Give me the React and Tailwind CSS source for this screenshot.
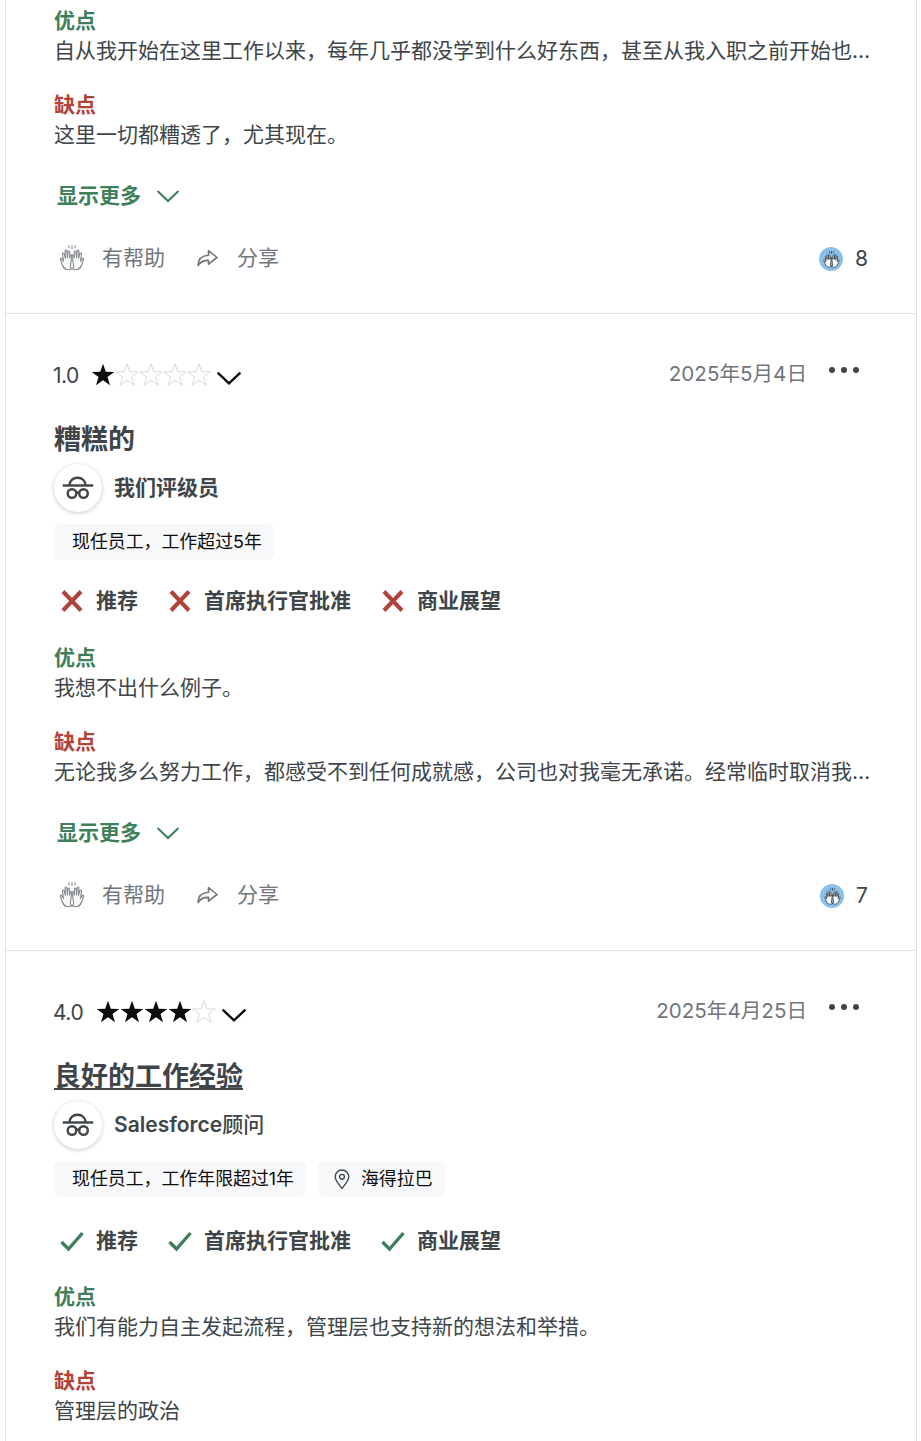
const GREEN = "#3f7f5b";
const font = { fontFamily: '"Inter","Noto Sans CJK SC",sans-serif' };

function Star({ filled }) {
  return (
    <svg width="24" height="24" viewBox="0 0 24 24" className="block shrink-0">
      <path d="M12 .8l2.800 8 8.500.1-6.800 5.100 2.500 8.200L12 17.300l-7 4.900 2.500-8.200L.7 8.900l8.500-.1z"
        fill={filled ? "#0d0d0d" : "#fff"} stroke={filled ? "#0d0d0d" : "#d9dbdf"} strokeWidth={filled ? 0 : 1} />
    </svg>
  );
}
function Chevron({ color = "#0d0d0d", w = 26, h = 26, sw = 2.200 }) {
  return (
    <svg width={w} height={h} viewBox="0 0 24 24" fill="none" stroke={color} strokeWidth={sw} className="block shrink-0">
      <path d="M1.500 7 12 17 22.500 7" />
    </svg>
  );
}
function Hands({ fill = "#f7f8f8", stroke = "#85898e", size = 26 }) {
  return (
    <svg width={size} height={size} viewBox="0 0 26 26" fill="none" stroke={stroke} strokeWidth="1.100" strokeLinecap="round" strokeLinejoin="round" className="block shrink-0">
      <path d="M12.800 23.800c-1.500 1-3.200 1.200-5 .7-2.200-.6-3.800-2.300-4.400-4.500L1.300 14.200c-.3-.9 1-1.500 1.500-.6l1.700 2.900-1-7.500c-.1-1.100 1.400-1.300 1.700-.2l1.200 4.500-.3-7.500c0-1.100 1.600-1.200 1.700 0l.6 7 .6-6.100c.1-1 1.500-1 1.600.1l.1 6.200 1-2.600c.3-1 1.500-.7 1.300.4l-1.100 6.200-.6 5.100z" fill={fill} />
      <path d="M13.200 23.800c1.500 1 3.200 1.200 5 .7 2.200-.6 3.800-2.300 4.400-4.500l2.100-5.800c.3-.9-1-1.500-1.500-.6l-1.700 2.900 1-7.500c.1-1.100-1.400-1.300-1.700-.2l-1.200 4.500.3-7.500c0-1.100-1.600-1.200-1.700 0l-.6 7-.6-6.100c-.1-1-1.500-1-1.600.1l-.1 6.200-1-2.600c-.3-1-1.500-.7-1.300.4l1.100 6.200.6 5.100z" fill={fill} />
      <path d="M13 3.500V.6M10.300 2.800 9.600.9M15.700 2.800 16.400.9" />
    </svg>
  );
}
function Share() {
  return (
    <svg width="24" height="24" viewBox="0 0 24 24" fill="none" stroke="#70767c" strokeWidth="1.600" strokeLinejoin="round" strokeLinecap="round" className="block shrink-0">
      <path d="M13.500 4.500 22 11.500l-8.500 6.700v-3.800c-4.500-.2-8 1.300-10.500 5.100.2-6 3.800-10 10.500-10.300z" />
    </svg>
  );
}
function Spy() {
  return (
    <svg width="32" height="24" viewBox="0 0 32 24" fill="none" stroke="#404549" strokeWidth="2.400" className="block">
      <path d="M7.500 9.500C7.500 4.500 11 1.800 15.500 1.800S23.500 4.500 23.500 9.500" />
      <path d="M.8 9.500h30.400" />
      <circle cx="10" cy="17.500" r="4.300" />
      <circle cx="21.500" cy="17.500" r="4.300" />
      <path d="M14.300 17c1-.7 2.900-.7 3 0" />
    </svg>
  );
}
function Pin() {
  return (
    <svg width="22" height="22" viewBox="0 0 20 20" fill="none" stroke="#404549" strokeWidth="1.200" className="block shrink-0">
      <path d="M10 18.500c-3-3.800-6.200-7-6.200-10.500a6.200 6.200 0 0 1 12.400 0c0 3.500-3.200 6.700-6.200 10.500z" />
      <circle cx="10" cy="8" r="2.200" />
    </svg>
  );
}
function Mark({ ok }) {
  return ok ? (
    <svg width="24" height="24" viewBox="0 0 24 24" fill="none" stroke={GREEN} strokeWidth="3.400" className="block shrink-0">
      <path d="M1.500 13 8.500 20 22.500 4" />
    </svg>
  ) : (
    <svg width="24" height="24" viewBox="0 0 24 24" fill="none" stroke="#b0433a" strokeWidth="4" className="block shrink-0">
      <path d="M3 2.500l18 19M21 2.500 3 21.500" />
    </svg>
  );
}
function Tag({ children, className = "" }) {
  return (
    <div className={`h-[36px] flex items-center rounded-md bg-[#f7f8fa] text-[17.9px] leading-[24px] text-[#0d0d0d] ${className}`}>
      {children}
    </div>
  );
}
function Block({ label, color, text, className = "" }) {
  return (
    <div className={className}>
      <div className={`text-[21px] leading-[30px] font-bold ${color}`}>{label}</div>
      <div className="text-[21px] leading-[30px] text-[#404549] truncate -mr-[4px]">{text}</div>
    </div>
  );
}
function Footer({ count }) {
  return (
    <div className="mt-[29px] flex items-center h-[40px]">
      <div className="w-[36px] flex justify-center"><Hands /></div>
      <span className="ml-[12px] text-[21px] text-[#70767c]">有帮助</span>
      <div className="ml-[30px]"><Share /></div>
      <span className="ml-[18px] text-[21px] text-[#70767c]">分享</span>
      <div className="ml-auto flex items-center mt-[2px]">
        <div className="w-[24px] h-[24px] rounded-full bg-[#8cc0ea] flex items-center justify-center">
          <Hands fill="#fff" stroke="#2d3135" size={17} />
        </div>
        <span className="ml-[12px] text-[21px] text-[#404549]">{count}</span>
      </div>
    </div>
  );
}
function ShowMore() {
  return (
    <div className="mt-[33px] ml-[3px] flex items-center h-[26px]">
      <span className="text-[21px] font-bold text-[#3f7f5b]">显示更多</span>
      <div className="ml-[15px]"><Chevron color={GREEN} w={24} h={24} sw={2} /></div>
    </div>
  );
}
function Header({ score, filled, date }) {
  return (
    <div className="flex items-start h-[36px]">
      <div className="flex items-center text-[21px] text-[#404549] mt-[6px]">
        <span className="tracking-[-0.5px] -ml-[1px]">{score}</span>
        <div className="flex ml-[12.5px] -mt-[2px]">
          {[0, 1, 2, 3, 4].map((i) => <Star key={i} filled={i < filled} />)}
        </div>
        <div className="ml-[5px] mt-[5px]"><Chevron /></div>
      </div>
      <div className="ml-auto flex items-center mt-[5px]">
        <span className="text-[20.6px] text-[#70767c] leading-[30px]">{date}</span>
        <div className="ml-[22px] mr-[9px] flex gap-[6px] -mt-[8px]">
          <span className="w-[6px] h-[6px] rounded-full bg-[#404549]" />
          <span className="w-[6px] h-[6px] rounded-full bg-[#404549]" />
          <span className="w-[6px] h-[6px] rounded-full bg-[#404549]" />
        </div>
      </div>
    </div>
  );
}
function Author({ children, mt }) {
  return (
    <div className={`flex items-center h-[48px] ${mt}`}>
      <div className="w-[48px] h-[48px] rounded-full bg-white shadow-[0_1px_4px_rgba(0,0,0,0.22)] flex items-center justify-center">
        <Spy />
      </div>
      <span className="ml-[12px] text-[21px] text-[#404549]">{children}</span>
    </div>
  );
}
function Ratings({ ok, mt }) {
  const items = ["推荐", "首席执行官批准", "商业展望"];
  return (
    <div className={`flex items-center gap-[30px] h-[40px] ml-[6px] ${mt}`}>
      {items.map((t) => (
        <div key={t} className="flex items-center">
          <Mark ok={ok} />
          <span className="ml-[12px] text-[21px] font-bold text-[#404549]">{t}</span>
        </div>
      ))}
    </div>
  );
}

export default function App() {
  return (
    <div style={font} className="w-[912px] ml-[5px] border-x border-[#dfe1e5] bg-white h-[1441px] overflow-hidden">
      <section className="px-[48px] pt-[6px] border-b border-[#dfe1e5] h-[314px]">
        <Block label="优点" color="text-[#3f7f5b]" text="自从我开始在这里工作以来，每年几乎都没学到什么好东西，甚至从我入职之前开始也是如此，情况一直都没有任何改善。" />
        <Block label="缺点" color="text-[#b0433a]" className="mt-[24px]" text="这里一切都糟透了，尤其现在。" />
        <ShowMore />
        <Footer count="8" />
      </section>
      <section className="px-[48px] pt-[40px] border-b border-[#dfe1e5] h-[637px]">
        <Header score="1.0" filled={1} date="2025年5月4日" />
        <div className="mt-[32px] text-[27px] leading-[36px] font-bold text-[#404549]">糟糕的</div>
        <Author mt="mt-[6px]"><span className="font-bold">我们评级员</span></Author>
        <div className="flex gap-[12px] mt-[12px]">
          <Tag className="pl-[18px] pr-[12px]">现任员工，工作超过5年</Tag>
        </div>
        <Ratings mt="mt-[21px]" />
        <Block label="优点" color="text-[#3f7f5b]" className="mt-[22px]" text="我想不出什么例子。" />
        <Block label="缺点" color="text-[#b0433a]" className="mt-[24px]" text="无论我多么努力工作，都感受不到任何成就感，公司也对我毫无承诺。经常临时取消我的安排，让人感到非常失望和沮丧。" />
        <ShowMore />
        <Footer count="7" />
      </section>
      <section className="px-[48px] pt-[40px]">
        <Header score="4.0" filled={4} date="2025年4月25日" />
        <div className="mt-[32px] text-[27px] leading-[36px] font-bold text-[#404549] underline">良好的工作经验</div>
        <Author mt="mt-[6px]"><span className="font-semibold">Salesforce</span><span className="font-medium">顾问</span></Author>
        <div className="flex gap-[12px] mt-[12px]">
          <Tag className="pl-[18px] pr-[12px]">现任员工，工作年限超过1年</Tag>
          <Tag className="pl-[13px] pr-[12px]"><Pin /><span className="ml-[8px]">海得拉巴</span></Tag>
        </div>
        <Ratings ok mt="mt-[24px]" />
        <Block label="优点" color="text-[#3f7f5b]" className="mt-[21px]" text="我们有能力自主发起流程，管理层也支持新的想法和举措。" />
        <Block label="缺点" color="text-[#b0433a]" className="mt-[24px]" text="管理层的政治" />
      </section>
    </div>
  );
}
